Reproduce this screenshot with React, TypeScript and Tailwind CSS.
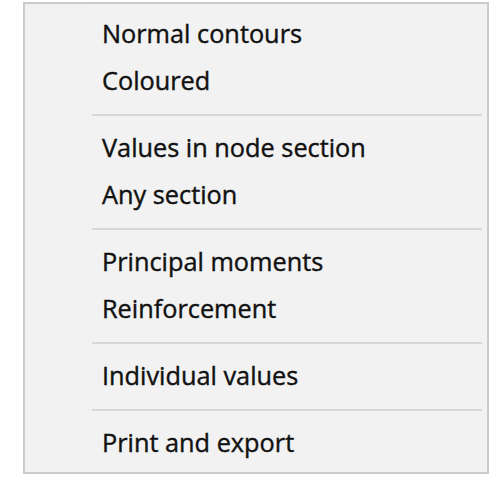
type Entry = { kind: 'item'; label: string } | { kind: 'sep' };

const entries: Entry[] = [
  { kind: 'item', label: 'Normal contours' },
  { kind: 'item', label: 'Coloured' },
  { kind: 'sep' },
  { kind: 'item', label: 'Values in node section' },
  { kind: 'item', label: 'Any section' },
  { kind: 'sep' },
  { kind: 'item', label: 'Principal moments' },
  { kind: 'item', label: 'Reinforcement' },
  { kind: 'sep' },
  { kind: 'item', label: 'Individual values' },
  { kind: 'sep' },
  { kind: 'item', label: 'Print and export' },
];

function MenuRow({ entry }: { entry: Entry }) {
  if (entry.kind === 'sep') {
    return (
      <div className="flex h-[20px] items-center pl-[67px] pr-[5px]">
        <div className="h-[2px] w-full bg-[#d7d7d7]" />
      </div>
    );
  }
  return (
    <div className="flex h-[47px] items-center pb-[2px] pl-[77px] text-[25.3px] leading-none text-[#111] [-webkit-text-stroke:0.4px_#111]">
      {entry.label}
    </div>
  );
}

export default function App() {
  return (
    <div className="h-[484px] w-[504px] bg-white pt-[2px] pl-[23px]">
      <div
        className="relative w-[466px] border-2 border-[#cbcbcb] bg-[#f1f1f1] pt-[7px] pb-[5px]"
        style={{ fontFamily: '"Open Sans", "Noto Sans", sans-serif' }}
      >
        <div className="absolute top-0 bottom-0 left-[67px] right-0 bg-[#f2f2f2]" />
        <div className="relative flex flex-col">
          {entries.map((entry, i) => (
            <MenuRow key={i} entry={entry} />
          ))}
        </div>
      </div>
    </div>
  );
}
